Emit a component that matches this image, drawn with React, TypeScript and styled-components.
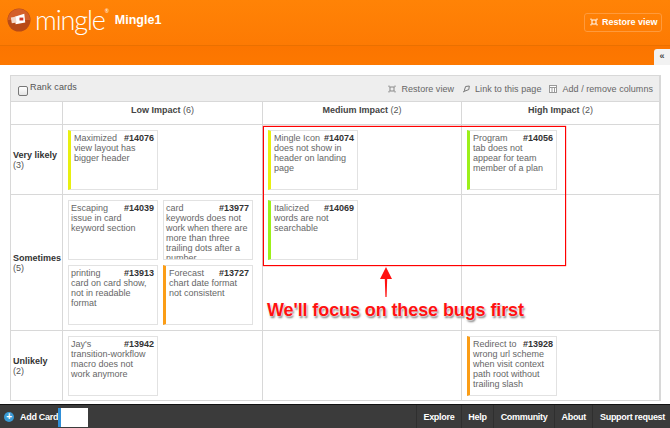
import React from "react";
import styled, { createGlobalStyle } from "styled-components";

const Global = createGlobalStyle`
  html, body { margin: 0; padding: 0; background: #fff; }
  body { font-family: "Liberation Sans", Arial, sans-serif; width: 670px; height: 428px; overflow: hidden; }
  * { box-sizing: border-box; }
`;
const Page = styled.div`
  position: relative; width: 670px; height: 428px; display: flex; flex-direction: column; background: #fff;
`;
const Header = styled.header`
  height: 46px; flex: none; display: flex; align-items: center; padding: 0 8px 0 7px;
  background: linear-gradient(#ff8306, #fd7a03);
  border-bottom: 1px solid #ea7000;
`;
const SubBar = styled.div`
  position: relative; height: 19px; flex: none; background: linear-gradient(#fb7500, #fd7800);
`;
const Logo = styled.div`
  display: flex; align-items: center; gap: 4px; margin-top: -6px;
`;
const Wordmark = styled.span`
  position: relative; font-family: "Lato", sans-serif; font-weight: 300; font-size: 27px; letter-spacing: -1.1px; color: #fff; line-height: 30px;
`;
const Registered = styled.span`
  position: absolute; top: 3px; right: -4px; font-size: 5px; line-height: 6px; font-weight: 400; letter-spacing: 0;
`;
const ProjectName = styled.span`
  margin-left: 10px; margin-top: -6px; font-size: 12.5px; font-weight: 700; color: #fff;
`;
const RestoreButton = styled.button`
  margin-left: auto; margin-top: -1px; width: 78px; height: 19px; padding: 0 0 0 5px; display: flex; align-items: center; gap: 4px; white-space: nowrap;
  border: 1px solid #ff9a3c; border-radius: 3px; background: transparent; color: #fff;
  font: 700 9px "Liberation Sans", sans-serif;
`;
const CollapseTab = styled.div`
  position: absolute; right: 0; top: 3px; width: 16px; height: 16px; background: #f2f2f2; border-radius: 3px 0 0 0;
  color: #444; font-size: 9px; font-weight: 700; line-height: 15px; text-align: center;
`;
const Main = styled.main`
  flex: 1; padding: 10px 9px 3px 10px; min-height: 0;
`;
const Board = styled.div`
  border: 1px solid #d8d8d8; border-width: 1px 2px 1px 1px; height: 100%; display: flex; flex-direction: column; color: #555; font-size: 9px;
`;
const Toolbar = styled.div`
  height: 26px; flex: none; display: flex; align-items: center; padding: 0 6px 0 7px; background: #eee; border-bottom: 1px solid #d8d8d8;
`;
const RankBox = styled.span`
  width: 10px; height: 10px; margin: 5px 2px 0 0; border: 1px solid #777; border-radius: 2px; background: linear-gradient(#fff, #e4e4e4);
`;
const RankLabel = styled.span`
  margin-top: -4px; letter-spacing: 0.15px; color: #555;
`;
const ToolActions = styled.div`
  margin-left: auto; display: flex; gap: 8px; margin-top: 1px;
`;
const ToolAction = styled.span`
  display: flex; align-items: center; gap: 5px; letter-spacing: 0.05px; color: #666;
`;
const Grid = styled.div`
  flex: 1; display: grid; grid-template-columns: 51px 200px 199px 1fr; grid-template-rows: 23px 70px 136px 1fr; min-height: 0;
`;
const ColumnHead = styled.div`
  border-left: 1px solid #d8d8d8; border-bottom: 1px solid #d8d8d8; text-align: center; padding-top: 3px; font-size: 9px; color: #555;
  b { color: #444; }
  &:first-child { border-left: 0; }
`;
const RowHead = styled.div<{ $last?: boolean }>`
  border-bottom: ${(p) => (p.$last ? "0" : "1px solid #d8d8d8")};
  padding: ${(p) => (p.$last ? "1px 0 0 2px" : "0 0 0 2px")}; display: flex; flex-direction: column; justify-content: center; font-size: 9px; line-height: 10px; color: #555;
  b { color: #333; white-space: nowrap; }
`;
const Cell = styled.div<{ $last?: boolean }>`
  border-left: 1px solid #d8d8d8; border-bottom: ${(p) => (p.$last ? "0" : "1px solid #d8d8d8")};
  padding: 5px 0 0 5px; display: flex; flex-wrap: wrap; gap: 5px; align-content: flex-start;
`;
const CardBox = styled.div<{ $stripe?: string }>`
  width: 90px; height: 60px; overflow: hidden; padding: 2px 3px 0 ${(p) => (p.$stripe ? "3px" : "2px")};
  border: 1px solid #e2e2e2; border-left: ${(p) => (p.$stripe ? `3px solid ${p.$stripe}` : "1px solid #e2e2e2")};
  background: #fff; font-size: 9px; line-height: 10px; color: #666; white-space: pre-line;
`;
const CardNo = styled.b`
  float: right; color: #333;
`;
const Footer = styled.footer`
  height: 24px; flex: none; display: flex; align-items: center; background: #3b3b3b; border-top: 1px solid #111; color: #fff; font-size: 9px; font-weight: 700; letter-spacing: -0.3px;
`;
const AddIcon = styled.span`
  width: 10px; height: 10px; margin: 0 6px 0 4px; border-radius: 50%; background: #3a9bd6; color: #fff; font-size: 10px; line-height: 10px; text-align: center;
`;
const AddInput = styled.span`
  width: 30px; height: 19px; margin-top: 2px; background: #fff; border-left: 3px solid #2f8fd8;
`;
const FooterNav = styled.nav`
  margin-left: auto; display: flex; height: 100%; padding-right: 5px;
`;
const NavItem = styled.a`
  display: flex; align-items: center; padding: 0 6.5px; border-left: 1px solid #2f2f2f; color: #fff;
  &:last-child { padding-right: 0; }
`;
const Highlight = styled.div`
  position: absolute; left: 263px; top: 126px; width: 303px; height: 140px; border: 1px solid #f00; box-shadow: 0 0 1px #f00; pointer-events: none;
`;
const Arrow = styled.svg`
  position: absolute; left: 380px; top: 267px;
`;
const Callout = styled.div`
  position: absolute; left: 267px; top: 300px; white-space: nowrap; font-size: 18px; line-height: 21px; font-weight: 700; letter-spacing: -0.1px; color: #f11;
  text-shadow: 0 0 2px #fff, 0 0 2px #fff, 1px 2px 2px #777;
`;

const RestoreIcon = ({ color }: { color: string }) => (
  <svg width="8" height="8" viewBox="0 0 8 8" fill="none" stroke={color} strokeWidth="1">
    <path d="M1.5 2h5M1.5 6h5M2 2v4M6 2v4" />
    <path d="M1 .5v1.5M7 .5v1.5M1 6v1.5M7 6v1.5" />
  </svg>
);
const LinkIcon = () => (
  <svg width="8" height="8" viewBox="0 0 8 8" fill="none" stroke="#777" strokeWidth="1">
    <path d="M1 7l2-1M3 6L6.8 4.6 7.3 1 3.6 1.5 2.4 5.2z" />
  </svg>
);
const ColumnsIcon = () => (
  <svg width="8" height="8" viewBox="0 0 8 8" fill="none" stroke="#999" strokeWidth="1">
    <rect x=".5" y=".5" width="7" height="7" fill="#fff" />
    <path d="M.5 2.5h7M3 2.5v5M5.5 2.5v5" />
  </svg>
);
const LogoMark = () => (
  <svg width="24" height="24" viewBox="0 0 25 25">
    <circle cx="12.5" cy="12.5" r="12" fill="#b84a17" />
    <path d="M1 12.5a11.5 11.5 0 0 1 23 0z" fill="#d4602a" />
    <path d="M8 9l10-3 1 9-10 2z" fill="#fff" />
    <path d="M4 10l5-1 1 6-5 1z" fill="#f4d8c8" />
    <rect x="13" y="10" width="4" height="3" fill="#d03a2a" />
  </svg>
);

type CardData = { no: string; title: string; body: string; stripe?: string };
const Y = "#e8f010";
const G = "#9cf01a";
const O = "#fb9d16";
const Card = ({ no, title, body, stripe }: CardData) => (
  <CardBox $stripe={stripe}>
    <CardNo>{no}</CardNo>
    {title}
    <br />
    {body}
  </CardBox>
);

const row1: CardData[][] = [
  [{ no: "#14076", title: "Maximized", body: "view layout has bigger header", stripe: Y }],
  [{ no: "#14074", title: "Mingle Icon", body: "does not show in header on landing page", stripe: Y }],
  [{ no: "#14056", title: "Program", body: "tab does not\nappear for team\nmember of a plan", stripe: G }],
];
const row2: CardData[][] = [
  [
    { no: "#14039", title: "Escaping", body: "issue in card keyword section" },
    { no: "#13977", title: "card", body: "keywords does not work when there are more than three trailing dots after a number" },
    { no: "#13913", title: "printing", body: "card on card show, not in readable format" },
    { no: "#13727", title: "Forecast", body: "chart date format not consistent", stripe: O },
  ],
  [{ no: "#14069", title: "Italicized", body: "words are not searchable", stripe: G }],
  [],
];
const row3: CardData[][] = [
  [{ no: "#13942", title: "Jay's", body: "transition-workflow macro does not work anymore" }],
  [],
  [{ no: "#13928", title: "Redirect to", body: "wrong url scheme when visit context path root without trailing slash", stripe: O }],
];
const Cells = ({ cells, last }: { cells: CardData[][]; last?: boolean }) => (
  <>
    {cells.map((list, i) => (
      <Cell key={i} $last={last}>
        {list.map((c) => (
          <Card key={c.no} {...c} />
        ))}
      </Cell>
    ))}
  </>
);

export default function App() {
  return (
    <Page>
      <Global />
      <Header>
        <Logo>
          <LogoMark />
          <Wordmark>mingle<Registered>®</Registered></Wordmark>
        </Logo>
        <ProjectName>Mingle1</ProjectName>
        <RestoreButton>
          <RestoreIcon color="#fff" />
          Restore view
        </RestoreButton>
      </Header>
      <SubBar>
        <CollapseTab>«</CollapseTab>
      </SubBar>
      <Main>
        <Board>
          <Toolbar>
            <RankBox />
            <RankLabel>Rank cards</RankLabel>
            <ToolActions>
              <ToolAction><RestoreIcon color="#888" />Restore view</ToolAction>
              <ToolAction><LinkIcon />Link to this page</ToolAction>
              <ToolAction><ColumnsIcon />Add / remove columns</ToolAction>
            </ToolActions>
          </Toolbar>
          <Grid>
            <ColumnHead />
            <ColumnHead><b>Low Impact</b> (6)</ColumnHead>
            <ColumnHead><b>Medium Impact</b> (2)</ColumnHead>
            <ColumnHead><b>High Impact</b> (2)</ColumnHead>
            <RowHead><b>Very likely</b>(3)</RowHead>
            <Cells cells={row1} />
            <RowHead><b>Sometimes</b>(5)</RowHead>
            <Cells cells={row2} />
            <RowHead $last><b>Unlikely</b>(2)</RowHead>
            <Cells cells={row3} last />
          </Grid>
        </Board>
      </Main>
      <Footer>
        <AddIcon>+</AddIcon>
        Add Card
        <AddInput />
        <FooterNav>
          <NavItem>Explore</NavItem>
          <NavItem>Help</NavItem>
          <NavItem>Community</NavItem>
          <NavItem>About</NavItem>
          <NavItem>Support request</NavItem>
        </FooterNav>
      </Footer>
      <Highlight />
      <Arrow width="12" height="31" viewBox="0 0 12 31">
        <path d="M6 0L12 12H7.2L6.6 30H5.4L4.8 12H0z" fill="#f11" />
      </Arrow>
      <Callout>We'll focus on these bugs first</Callout>
    </Page>
  );
}
